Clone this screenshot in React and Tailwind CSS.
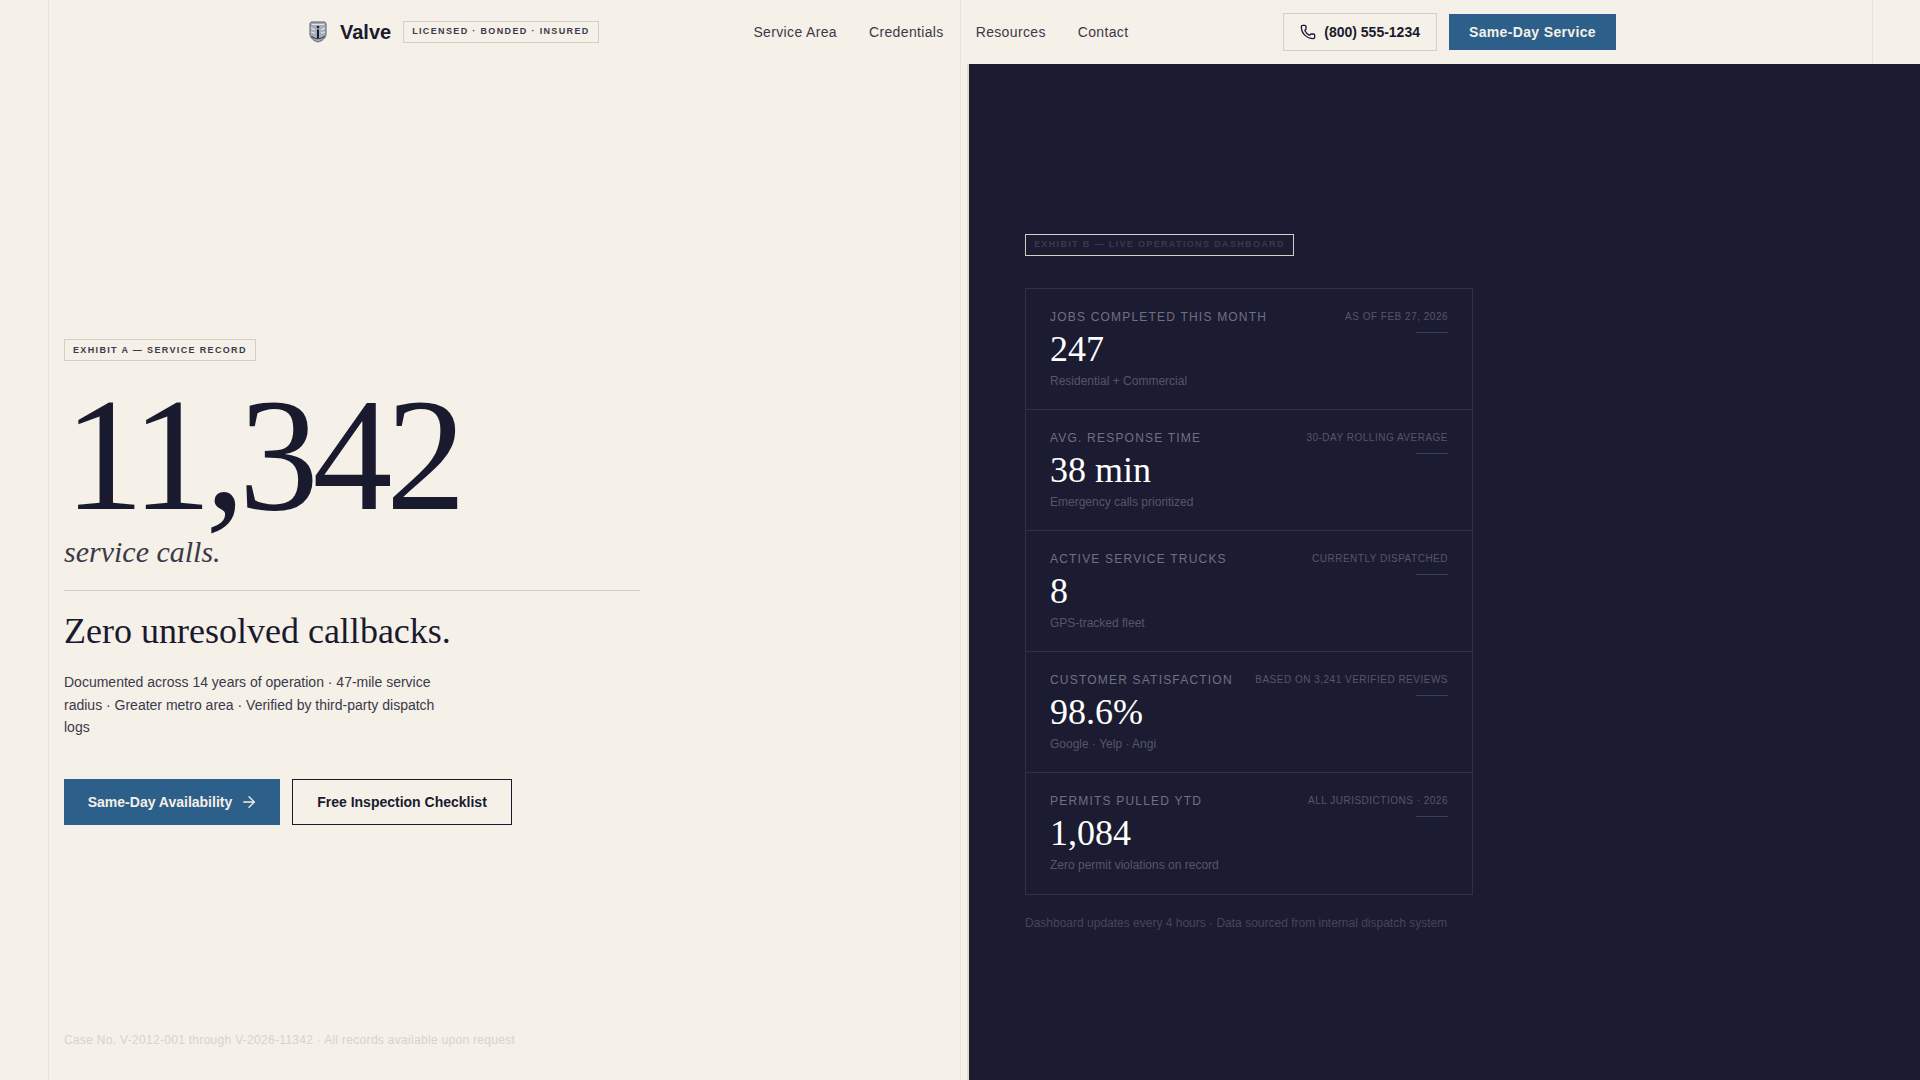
import React from 'react'
import { Phone, ArrowRight } from 'lucide-react'

const sans = "font-['Liberation_Sans',Arial,sans-serif]"
const serif = "font-['Liberation_Serif','Times_New_Roman',serif]"

const stats = [
    { label: 'Jobs Completed This Month', note: 'As of Feb 27, 2026', value: '247', sub: 'Residential + Commercial' },
    { label: 'Avg. Response Time', note: '30-day rolling average', value: '38 min', sub: 'Emergency calls prioritized' },
    { label: 'Active Service Trucks', note: 'Currently dispatched', value: '8', sub: 'GPS-tracked fleet' },
    { label: 'Customer Satisfaction', note: 'Based on 3,241 verified reviews', value: '98.6%', sub: 'Google · Yelp · Angi' },
    { label: 'Permits Pulled YTD', note: 'All jurisdictions · 2026', value: '1,084', sub: 'Zero permit violations on record' },
]

function Logo() {
    return (
        <svg width="20" height="22" viewBox="0 0 20 22" className="shrink-0">
            <path d="M2 3 C2 1.5 3 1 4 1 H16 C17 1 18 1.5 18 3 V13 C18 17 14 20 10 21 C6 20 2 17 2 13 Z" fill="#a7adb8" stroke="#5a6070" strokeWidth="1" />
            <path d="M4 3.5 H16 M3 7 L7 9 M17 7 L13 9 M3 11 L7 12 M17 11 L13 12" stroke="#e4e5e8" strokeWidth="1.1" fill="none" />
            <path d="M3.5 15 C6 18.5 14 18.5 16.5 15" stroke="#3a3f4c" strokeWidth="1.2" fill="none" />
            <circle cx="10" cy="6" r="1.3" fill="#1a1a2e" />
            <rect x="9" y="8.5" width="2" height="8.5" fill="#1a1a2e" />
        </svg>
    )
}

function StatRow({ stat, last }) {
    return (
        <div className={`px-6 pt-5 h-[121px] ${last ? '' : 'border-b border-[#2f3146]'}`}>
            <div className="flex justify-between items-start">
                <span className="text-xs leading-4 uppercase tracking-[0.1em] text-[#707083]">{stat.label}</span>
                <div className="flex flex-col items-end">
                    <span className="text-[10px] leading-4 uppercase tracking-[0.05em] text-[#55566a]">{stat.note}</span>
                    <span className="w-8 h-px mt-[7px] bg-[#34405c]"></span>
                </div>
            </div>
            <div className={`${serif} text-4xl leading-10 -mt-[4px] text-white`}>{stat.value}</div>
            <div className="text-xs leading-4 mt-1 text-[#55566a]">{stat.sub}</div>
        </div>
    )
}

export default function App() {
    return (
        <div className={`${sans} relative w-full h-[1080px] overflow-hidden bg-[#f5f0e8] flex flex-col`}>
            <nav className="h-16 shrink-0">
                <div className="max-w-[1440px] h-16 mx-auto px-16 flex items-center justify-between">
                    <div className="flex items-center">
                        <span className="ml-1"><Logo /></span>
                        <span className="ml-3 text-xl font-bold text-[#1a1a2e]">Valve</span>
                        <span className="ml-3 h-[22px] px-2 flex items-center border border-[#d4cfc6] text-[9px] font-bold uppercase tracking-[0.15em] text-[#3a3a4a]">Licensed · Bonded · Insured</span>
                    </div>
                    <div className="flex items-center gap-8 text-sm text-[#3a3a4a] tracking-[0.025em]">
                        <span>Service Area</span>
                        <span>Credentials</span>
                        <span>Resources</span>
                        <span>Contact</span>
                    </div>
                    <div className="flex items-center gap-3">
                        <div className="h-[38px] px-4 flex items-center gap-2 border border-[#d4cfc6] text-sm font-semibold text-[#1a1a2e]">
                            <Phone size={16} strokeWidth={2} />
                            <span>(800) 555-1234</span>
                        </div>
                        <div className="h-9 px-5 flex items-center bg-[#2c5f8a] text-sm font-bold tracking-[0.025em] text-[#f5f0e8]">Same-Day Service</div>
                    </div>
                </div>
            </nav>
            <div className="absolute left-12 top-0 h-full w-px bg-[#e8e3da]"></div>
            <div className="absolute left-[960px] top-0 h-full w-px bg-[#e8e3da]"></div>
            <div className="absolute left-[1872px] top-0 h-16 w-px bg-[#e8e3da]"></div>

            <main className="flex-1 flex min-h-0">
                <section className="w-[969px] shrink-0 pl-16 pt-5 border-r-2 border-[#e2ddd3] relative flex flex-col justify-center">
                    <div className="self-start h-[22px] px-2 flex items-center border border-[#d4cfc6] text-[9px] font-bold uppercase tracking-[0.15em] text-[#3a3a4a]">Exhibit A — Service Record</div>
                    <div className={`${serif} mt-5 text-[160px] leading-[148px] tracking-[-0.04em] text-[#1a1a2e]`}>11,342</div>
                    <div className={`${serif} text-[30px] italic text-[#3a3a4a]`}>service calls.</div>
                    <div className="w-[576px] h-px bg-[#d4cfc6] mt-4"></div>
                    <div className={`${serif} text-4xl text-[#1a1a2e] mt-5`}>Zero unresolved callbacks.</div>
                    <p className="w-[384px] text-sm leading-[22.4px] text-[#3a3a4a] mt-5">Documented across 14 years of operation · 47-mile service radius · Greater metro area · Verified by third-party dispatch logs</p>
                    <div className="flex gap-3 mt-10">
                        <div className="w-[216px] h-[46px] pl-[2px] flex items-center justify-center gap-2 bg-[#2c5f8a] text-sm font-bold text-[#f5f0e8]">
                            Same-Day Availability <ArrowRight size={18} strokeWidth={1.75} />
                        </div>
                        <div className="w-[220px] h-[46px] flex items-center justify-center border border-[#1a1a2e] text-sm font-bold text-[#1a1a2e]">Free Inspection Checklist</div>
                    </div>
                    <div className="absolute left-16 bottom-8 text-xs tracking-[0.025em] text-[#d8d3cb]">Case No. V-2012-001 through V-2026-11342 · All records available upon request</div>
                </section>
                <section className="flex-1 bg-[#1b1c31] pl-14 pt-5 flex flex-col justify-center">
                    <div className="self-start h-[22px] px-2 flex items-center border border-[#d4cfc6] text-[9px] font-bold uppercase tracking-[0.15em] text-[#3a3a4a]">Exhibit B — Live Operations Dashboard</div>
                    <div className="w-[448px] mt-8 border border-[#2f3146]">
                        {stats.map((stat, i) => (
                            <StatRow key={stat.label} stat={stat} last={i === stats.length - 1} />
                        ))}
                    </div>
                    <div className="mt-5 text-xs text-[#45465a]">Dashboard updates every 4 hours · Data sourced from internal dispatch system</div>
                </section>
            </main>
        </div>
    )
}
